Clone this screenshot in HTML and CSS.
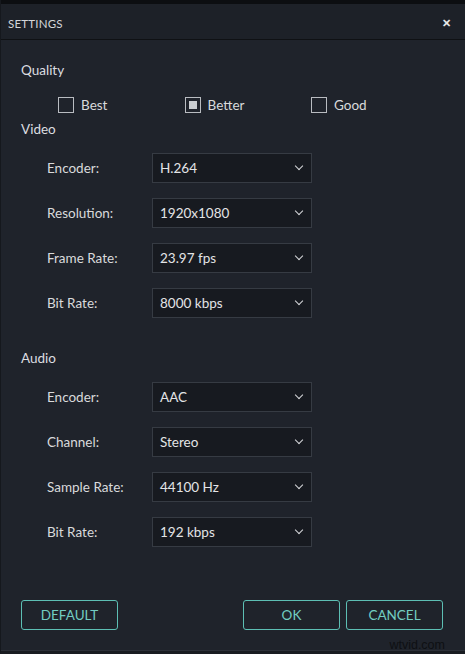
FILE: index.html
```html
<!DOCTYPE html>
<html>
    <head lang="en">
        <meta charset="UTF-8">
        <title>Settings</title>
        <link rel="stylesheet" href="styles.css">
    </head>
    <body>
        <div id="dialog">
            <div class="topstrip"></div>
            <div class="titlebar">
                <span class="title">SETTINGS</span>
                <span class="close">&#x2715;</span>
            </div>
            <div class="content">
                <div class="heading first">Quality</div>
                <ul class="quality">
                    <li><span class="box"></span>Best</li>
                    <li><span class="box checked"></span>Better</li>
                    <li><span class="box"></span>Good</li>
                </ul>
                <div class="heading video">Video</div>
                <div class="rows">
                    <div class="row"><label>Encoder:</label><div class="select">H.264<i class="chev"></i></div></div>
                    <div class="row"><label>Resolution:</label><div class="select">1920x1080<i class="chev"></i></div></div>
                    <div class="row"><label>Frame Rate:</label><div class="select">23.97 fps<i class="chev"></i></div></div>
                    <div class="row"><label>Bit Rate:</label><div class="select">8000 kbps<i class="chev"></i></div></div>
                </div>
                <div class="heading audio">Audio</div>
                <div class="rows">
                    <div class="row"><label>Encoder:</label><div class="select">AAC<i class="chev"></i></div></div>
                    <div class="row"><label>Channel:</label><div class="select">Stereo<i class="chev"></i></div></div>
                    <div class="row"><label>Sample Rate:</label><div class="select">44100 Hz<i class="chev"></i></div></div>
                    <div class="row"><label>Bit Rate:</label><div class="select">192 kbps<i class="chev"></i></div></div>
                </div>
            </div>
            <div class="buttons">
                <span class="btn">DEFAULT</span>
                <span class="spacer"></span>
                <span class="btn">OK</span>
                <span class="btn">CANCEL</span>
            </div>
            <span class="mark">wtvid.com</span>
        </div>
    </body>
</html>
```

FILE: styles.css
```css
*{
    margin:0;
    padding:0;
    box-sizing:border-box;
}
ul{
    list-style:none;
}
html,body{
    background:#1f232b;
}
body{
    font-family:Lato, "Liberation Sans", sans-serif;
    font-size:13px;
    color:#d9dadc;
}
#dialog{
    position:relative;
    width:465px;
    height:654px;
    background:#1f232b;
    border-left:1px solid #15181d;
    border-bottom:3px solid #191c21;
    box-shadow:inset 0 -1px 0 #2c3038;
}
.topstrip{
    height:4px;
    background:#0c0e11;
}
.titlebar{
    height:36px;
    display:flex;
    align-items:center;
    justify-content:space-between;
    padding:3px 14px 0 7px;
    background:#1d2128;
    border-bottom:1px solid #0f1114;
}
.title{
    font-size:11.5px;
    letter-spacing:0.2px;
    color:#d4d6d9;
}
.close{
    font-size:11px;
    font-weight:bold;
    color:#e8e8e8;
}
.content{
    padding-left:20px;
}
.heading{
    height:20px;
    line-height:20px;
    font-size:13.5px;
    color:#dcdde0;
}
.heading.first{
    margin-top:20px;
}
.quality{
    display:flex;
    margin-top:15px;
    padding-left:37px;
    height:20px;
    align-items:center;
}
.quality li{
    width:126.5px;
    display:flex;
    align-items:center;
    font-size:13.5px;
}
.box{
    width:16px;
    height:16px;
    border:1.5px solid #b9bcc1;
    margin-right:7px;
    display:flex;
    align-items:center;
    justify-content:center;
}
.box.checked:after{
    content:"";
    width:8px;
    height:8px;
    background:#c9ccd0;
}
.heading.video{
    margin-top:4px;
}
.heading.audio{
    margin-top:31px;
}
.rows{
    display:flex;
    flex-direction:column;
    gap:16px;
    margin-top:14px;
    padding-left:26px;
}
.row{
    display:flex;
    align-items:center;
    height:29px;
}
.row label{
    width:105px;
    font-size:13.5px;
    color:#d9dadc;
}
.select{
    width:160px;
    height:30px;
    display:flex;
    align-items:center;
    justify-content:space-between;
    padding:0 9px 0 7px;
    background:#171a20;
    border:1px solid #363b43;
    font-size:13.5px;
    color:#e3e4e6;
}
.chev{
    width:6px;
    height:6px;
    border-right:1.5px solid #d6d7da;
    border-bottom:1.5px solid #d6d7da;
    transform:rotate(45deg);
    margin-top:-4px;
}
.buttons{
    display:flex;
    gap:6px;
    padding:54px 22px 0 20px;
}
.spacer{
    flex:1;
}
.btn{
    width:97px;
    height:30px;
    display:flex;
    align-items:center;
    justify-content:center;
    border:1.5px solid #5dbfb4;
    border-radius:3px;
    color:#72cdc2;
    font-size:13.5px;
}
.mark{
    position:absolute;
    right:20px;
    bottom:-1px;
    font-family:"Liberation Sans", sans-serif;
    font-size:12.5px;
    color:#0e1013;
}
```
